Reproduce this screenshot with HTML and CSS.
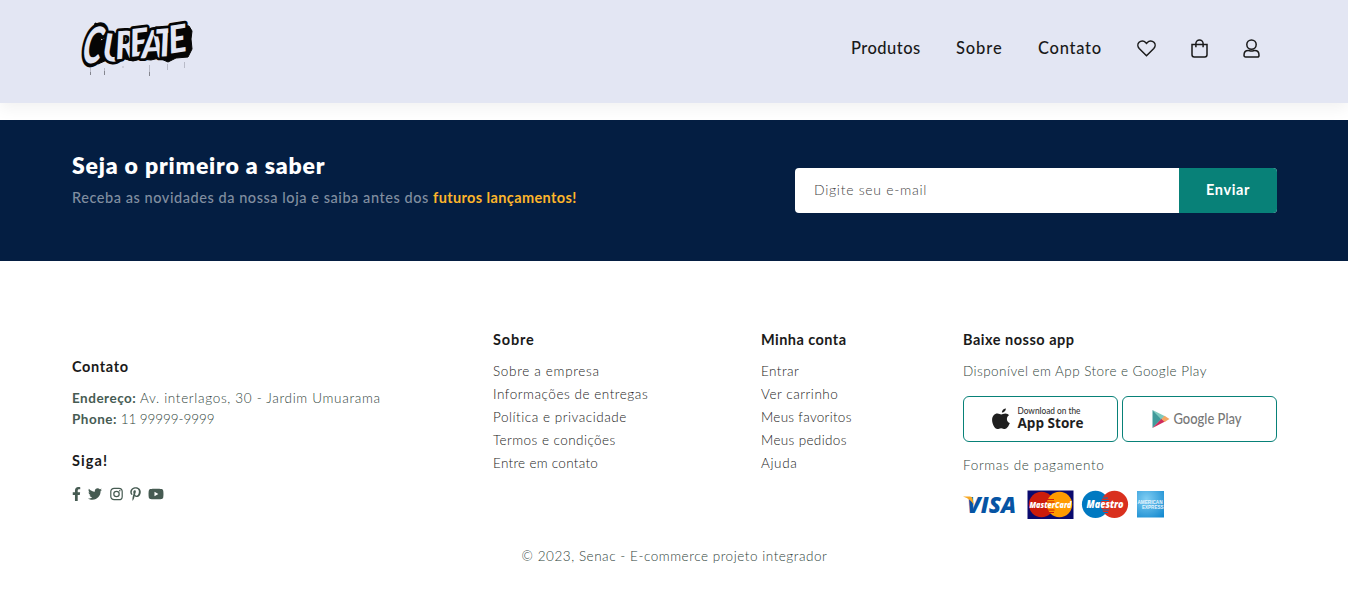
FILE: index.html
```html
<!DOCTYPE html>
<html lang="pt-BR">
<head>
<meta charset="utf-8">
<title>Cureate</title>
<link rel="stylesheet" href="styles.css">
</head>
<body>
<header class="header">
  <a class="logo" aria-label="Cureate">
    <svg width="120" height="64" viewBox="0 0 120 64">
      <path class="drips" d="M15.500 48v6M29.500 48v7M48 46v2M74.500 45v11M92.500 44v6M109.500 42v6"/>
      <path class="drips drips-end" d="M15.500 52v3M29.500 51v4M74.500 52v4"/>
      <path class="shade" d="M20 8l7 2 1 7-3 9 7-3 9-5 3-1 4 2 8-2 6 1 9-3 10-3 9 1 12-3 12 1 3 5-1 8 1 10-4 8-12 1-8 4-9-4-8 2-10-1-8 2-8-2-9 2-9-1-9 4-7-3-1-12 3-14Z"/>
      <text class="tag tag-big" transform="translate(6 48) skewX(-9) scale(.62 1)">C</text>
      <g transform="translate(0 -5) scale(1 1.120)"><text class="tag" x="27 41 56 67 81 95" y="45 44 42 43 42 39" rotate="4 -4 -6 -2 -4 -8">UREATE</text></g>
    </svg>
  </a>
  <nav class="nav">
    <a class="nav-produtos">Produtos</a>
    <a class="nav-sobre">Sobre</a>
    <a class="nav-contato">Contato</a>
    <svg class="icon-heart" width="19" height="17" viewBox="0 0 19 17"><path d="M9.500 15.800 2.200 8.500C.4 6.600.5 3.900 2.100 2.300 4 .500 6.900.600 8.600 2.400L9.500 3.400 10.400 2.400C12.100.600 15 .500 16.900 2.300 18.500 3.900 18.600 6.600 16.800 8.500Z"/></svg>
    <svg class="icon-bag" width="17" height="19" viewBox="0 0 17 19"><path d="M1 5.500h15v10.300a2.200 2.200 0 0 1-2.200 2.200H3.200A2.200 2.200 0 0 1 1 15.800ZM4.900 8.300V4.600a3.600 3.600 0 0 1 7.200 0v3.700"/></svg>
    <svg class="icon-user" width="17" height="19" viewBox="0 0 17 19"><circle cx="8.500" cy="5.600" r="4.700"/><path d="M1 16.200c0-3 1.700-4.700 4.200-4.700 1.100 0 1.700.5 3.300.5s2.200-.5 3.300-.5c2.500 0 4.200 1.700 4.200 4.700 0 1.200-.6 1.900-1.600 1.900H2.600C1.600 18.100 1 17.400 1 16.200Z"/></svg>
  </nav>
</header>

<section class="newsletter">
  <div>
    <h4 class="news-title">Seja o primeiro a saber</h4>
    <p class="news-text">Receba as novidades da nossa loja e saiba antes dos <b>futuros lançamentos!</b></p>
  </div>
  <form class="news-form">
    <div class="field">Digite seu e-mail</div>
    <div class="send">Enviar</div>
  </form>
</section>

<footer class="footer">
  <div class="columns">
    <div class="col col-contact">
      <h4 class="track-65">Contato</h4>
      <p><b>Endereço:</b> <span class="track-70">Av. interlagos, 30 - Jardim Umuarama</span></p>
      <p><b>Phone:</b> <span class="phone">11 99999-9999</span></p>
      <h4 class="follow track-110">Siga!</h4>
      <div class="social">
        <svg width="9" height="14" viewBox="0 0 320 512"><path d="M279 288l14-93h-89v-60c0-25 12-50 52-50h41V7s-37-7-72-7c-73 0-121 44-121 125v70H23v93h81v224h100V288z"/></svg>
        <svg width="14" height="14" viewBox="0 0 512 512"><path d="M459 152c.3 4.500.3 9 .3 13.600 0 139-106 299-299 299-59 0-115-17-161-47 8 1 16 1.300 25 1.300 49 0 94-17 130-45-46-1-85-31-98-73 6.500 1 13 1.600 20 1.600 9 0 19-1.300 28-3.600-48-10-84-52-84-103v-1.300c14 8 30 13 47 13.600-28-19-47-51-47-87 0-19 5-37 14-53 52 64 129 105 216 110-1.600-8-2.600-16-2.600-24 0-58 47-105 105-105 30 0 58 13 77 33 24-4.500 47-13 67-25-8 24-24 45-46 58 21-2 42-8 60-16-14 21-32 39-52 54z"/></svg>
        <svg width="13" height="14" viewBox="0 0 13 14"><g class="lens"><rect x=".8" y="1.300" width="11.400" height="11.400" rx="3.300"/><circle cx="6.500" cy="7" r="2.700"/></g><circle cx="9.800" cy="3.800" r=".8"/></svg>
        <svg width="11" height="14" viewBox="0 0 384 512"><path d="M204 6.500C101 6.500 0 75 0 186c0 70 40 110 64 110 10 0 15-28 15-35 0-9-24-29-24-68 0-81 61-138 141-138 68 0 119 39 119 110 0 53-21 153-90 153-25 0-46-18-46-44 0-38 26-74 26-113 0-66-94-54-94 26 0 17 2 35 10 51-14 59-42 147-42 208 0 19 3 37 4 56 3.400 4 1.700 3.400 7 1.500 50-69 49-83 72-173 12 23 44 36 69 36 106 0 154-103 154-197C384 71 298 6.500 204 6.500z"/></svg>
        <svg width="16" height="14" viewBox="0 0 576 512"><path fill-rule="evenodd" d="M550 124c-6-24-25-42-49-49C458 64 288 64 288 64S117 64 75 75c-24 7-42 25-49 49-11 43-11 132-11 132s0 90 11 133c6 23 25 41 49 48 42 11 213 11 213 11s171 0 213-11c24-7 43-25 49-48 11-43 11-133 11-133s0-89-11-132zM232 338V175l143 81z"/></svg>
      </div>
    </div>
    <div class="col col-links">
      <h4 class="track-80">Sobre</h4>
      <a class="track-70">Sobre a empresa</a>
      <a class="track-55">Informações de entregas</a>
      <a class="track-55">Política e privacidade</a>
      <a class="track-45">Termos e condições</a>
      <a class="track-30">Entre em contato</a>
    </div>
    <div class="col col-links">
      <h4 class="track-45">Minha conta</h4>
      <a class="track-45">Entrar</a>
      <a class="track-55">Ver carrinho</a>
      <a class="track-30">Meus favoritos</a>
      <a class="track-35">Meus pedidos</a>
      <a class="track-65">Ajuda</a>
    </div>
    <div class="col col-app">
      <h4 class="track-50">Baixe nosso app</h4>
      <p class="track-45">Disponível em App Store e Google Play</p>
      <div class="stores">
        <div class="store"><svg width="153" height="44" viewBox="0 0 153 44">
          <path fill="#1f1f1f" d="M41.800 11.400c.2 2-1.800 4.200-3.900 4.100-.2-2 1.800-4 3.900-4.100ZM45 18.200c-3 1.800-2.800 6.400.8 7.800-.9 2.800-3 6-5 6-1.400 0-2-.8-3.700-.8s-2.400.8-3.700.8c-2.700 0-5.300-5-5.300-9 0-4 2.500-6.500 5.300-6.500 1.600 0 2.800.9 3.800.9s2.400-1 4.200-1c1.500 0 2.900.7 3.600 1.800Z"/>
          <text x="53.500" y="16.500" class="store-small" textLength="63" lengthAdjust="spacingAndGlyphs">Download on the</text><text x="53.500" y="31" class="store-big" textLength="66" lengthAdjust="spacingAndGlyphs">App Store</text></svg></div>
        <div class="store"><svg width="153" height="44" viewBox="0 0 153 44">
          <path fill="#409b9b" d="M29.500 13v18l9-9Z"/><path fill="#7dc9bd" d="M29.500 13l13 6.600-4 2.900Z"/><path fill="#d02b5b" d="M29.500 31l13-6.700-4-2.600Z"/><path fill="#f4a663" d="m41.500 18.800 5 3.200-5 3-3-3Z"/>
          <text x="50.500" y="27" class="google" textLength="68" lengthAdjust="spacingAndGlyphs">Google Play</text></svg></div>
      </div>
      <p class="pay-label track-65">Formas de pagamento</p>
      <svg class="cards" width="202" height="30" viewBox="0 0 202 30">
        <text x="4" y="22.500" class="visa" textLength="49" lengthAdjust="spacingAndGlyphs">VISA</text><path fill="#f7a823" d="M0 6.500h7q2 0 2.400 1.800l1.600 7Q8 9 0 6.500Z"/>
        <path fill="#0a0a6e" d="M64.500.5h46v28.500h-46z"/><circle cx="78.500" cy="14.500" r="12.700" fill="#cc1c0c"/><circle cx="96.500" cy="14.500" r="12.700" fill="#ff9b00"/><path d="M84 9.500h7M83.500 12h8M83.500 20h8M84 22.500h7" stroke="#cc1c0c"/>
        <text x="66.500" y="18" class="card-name" textLength="42" lengthAdjust="spacingAndGlyphs">MasterCard</text>
        <circle cx="132.500" cy="14.300" r="13.600" fill="#0079c1"/><circle cx="151.500" cy="14.300" r="13.600" fill="#d9301e"/><path d="M138 8h7M137.500 10.500h8.500M137.500 20h8.500M138 22.500h7" stroke="#0079c1"/>
        <text x="123.500" y="18" class="card-name maestro" textLength="37" lengthAdjust="spacingAndGlyphs">Maestro</text>
        <defs><radialGradient id="amex" cx=".35" cy=".3" r=".9"><stop offset="0" stop-color="#7fcdf3"/><stop offset="1" stop-color="#1389cf"/></radialGradient></defs>
        <path fill="url(#amex)" d="M174 1h27v26.500h-27z"/><text x="174.500" y="13.500" class="amex" textLength="25" lengthAdjust="spacingAndGlyphs">AMERICAN</text><text x="179" y="19" class="amex" textLength="21.500" lengthAdjust="spacingAndGlyphs">EXPRESS</text>
      </svg>
    </div>
  </div>
  <p class="copyright track-55">© 2023, Senac - E-commerce projeto integrador</p>
</footer>
</body>
</html>
```
FILE: styles.css
```css
* { box-sizing: border-box; margin: 0; padding: 0; }
body { font-family: Lato, "Open Sans", sans-serif; background: #fff; color: #465b52; }
svg { display: block; flex: none; overflow: visible; }

/* Letter tracking */
.track-30 { letter-spacing: .29px; }
.track-35 { letter-spacing: .35px; }
.track-45 { letter-spacing: .45px; }
.track-50 { letter-spacing: .51px; }
.track-55 { letter-spacing: .54px; }
.track-65 { letter-spacing: .65px; }
.track-70 { letter-spacing: .68px; }
.track-80 { letter-spacing: .84px; }
.track-110 { letter-spacing: 1.1px; }

/* Header */
.header { position: relative; height: 103px; padding: 15px 88px 0 75px; display: flex; justify-content: space-between; background: #e3e6f3; box-shadow: 0 5px 15px rgba(0,0,0,.06); }
.shade { fill: #050505; stroke: #050505; stroke-width: 1px; stroke-linejoin: round; }
.tag { font-family: Lato, sans-serif; font-style: italic; font-weight: 900; font-size: 34px; fill: #e3e6f3; stroke: #050505; stroke-width: 5px; stroke-linejoin: round; paint-order: stroke; }
.tag-big { font-size: 50px; stroke-width: 8px; }
.drips { stroke: #b9bbc8; stroke-width: 1px; fill: none; transform: translateY(5px); }
.drips-end { stroke: #85868f; }
.nav { height: 66px; display: flex; align-items: center; color: #1a1a1a; font-size: 16.500px; font-weight: 500; white-space: nowrap; }
.nav svg { fill: none; stroke: #1a1a1a; stroke-width: 1.500px; }
.nav-produtos { width: 105px; letter-spacing: .46px; }
.nav-sobre { width: 82px; letter-spacing: .9px; }
.nav-contato { width: 99px; letter-spacing: .72px; }
.icon-heart, .icon-bag { margin-right: 35px; }

/* Newsletter */
.newsletter { margin-top: 17px; height: 141px; padding: 31px 71px 0 72px; display: flex; justify-content: space-between; background: #041e42; white-space: nowrap; }
.news-title { font-size: 23px; line-height: 28px; color: #fff; font-weight: 800; letter-spacing: .82px; }
.news-text { margin-top: 9px; font-size: 14.500px; line-height: 20px; font-weight: 500; letter-spacing: .55px; color: #818ea0; }
.news-text b { color: #fdb52b; font-weight: 700; letter-spacing: .38px; }
.news-form { display: flex; width: 482px; height: 45px; margin-top: 17px; border-radius: 4px; overflow: hidden; background: #fff; line-height: 43px; }
.field { flex: 1; padding-left: 19px; font-size: 14px; letter-spacing: .7px; font-weight: 300; color: #444; }
.send { width: 98px; text-align: center; background: #088178; color: #fff; font-size: 14.500px; letter-spacing: .65px; font-weight: 700; }

/* Footer */
.footer { padding: 69px 71px 0 72px; font-size: 13.500px; font-weight: 300; color: #30443b; white-space: nowrap; }
.columns { display: grid; grid-template-columns: 421px 268px 202px 314px; height: 215px; }
.col h4 { font-size: 14.500px; line-height: 19px; margin-bottom: 11px; color: #1a1a1a; font-weight: 700; }
.col-contact { padding-top: 27px; }
.col-contact h4 { margin-bottom: 12px; }
.col-contact p { line-height: 21px; }
.col-contact b { color: #465b52; font-weight: 700; letter-spacing: .5px; }
.phone { letter-spacing: -.08px; }
.col-contact .follow { margin: 21px 0 0; }
.social { display: flex; align-items: center; margin-top: 15px; height: 18px; gap: 7.300px; fill: #465b52; }
.lens { fill: none; stroke: #465b52; stroke-width: 1.200px; }
.col-links a { display: block; line-height: 23px; color: #1a1a1a; }
.col-app p { margin-top: 13px; line-height: 18px; }
.stores { display: flex; gap: 4px; margin-top: 16px; }
.store { width: 155px; height: 46px; border: 1px solid #088178; border-radius: 6px; }
.col-app .pay-label { margin-top: 14px; }
.cards { margin-top: 16px; }
.store-small { font: 500 8.500px Lato, sans-serif; fill: #333; }
.store-big { font: 700 14px "Open Sans", sans-serif; fill: #1f1f1f; }
.google { font: 500 14.500px Lato, sans-serif; fill: #777; }
.visa { font: italic 800 23px "Open Sans", sans-serif; fill: #0654a4; }
.card-name { font: italic 800 9px "Open Sans", sans-serif; fill: #fff; }
.maestro { font-size: 10px; }
.amex { font: 700 5px "Liberation Sans", sans-serif; fill: #e6f5fd; }
.copyright { text-align: center; line-height: 20px; margin-top: 1px; }
```
